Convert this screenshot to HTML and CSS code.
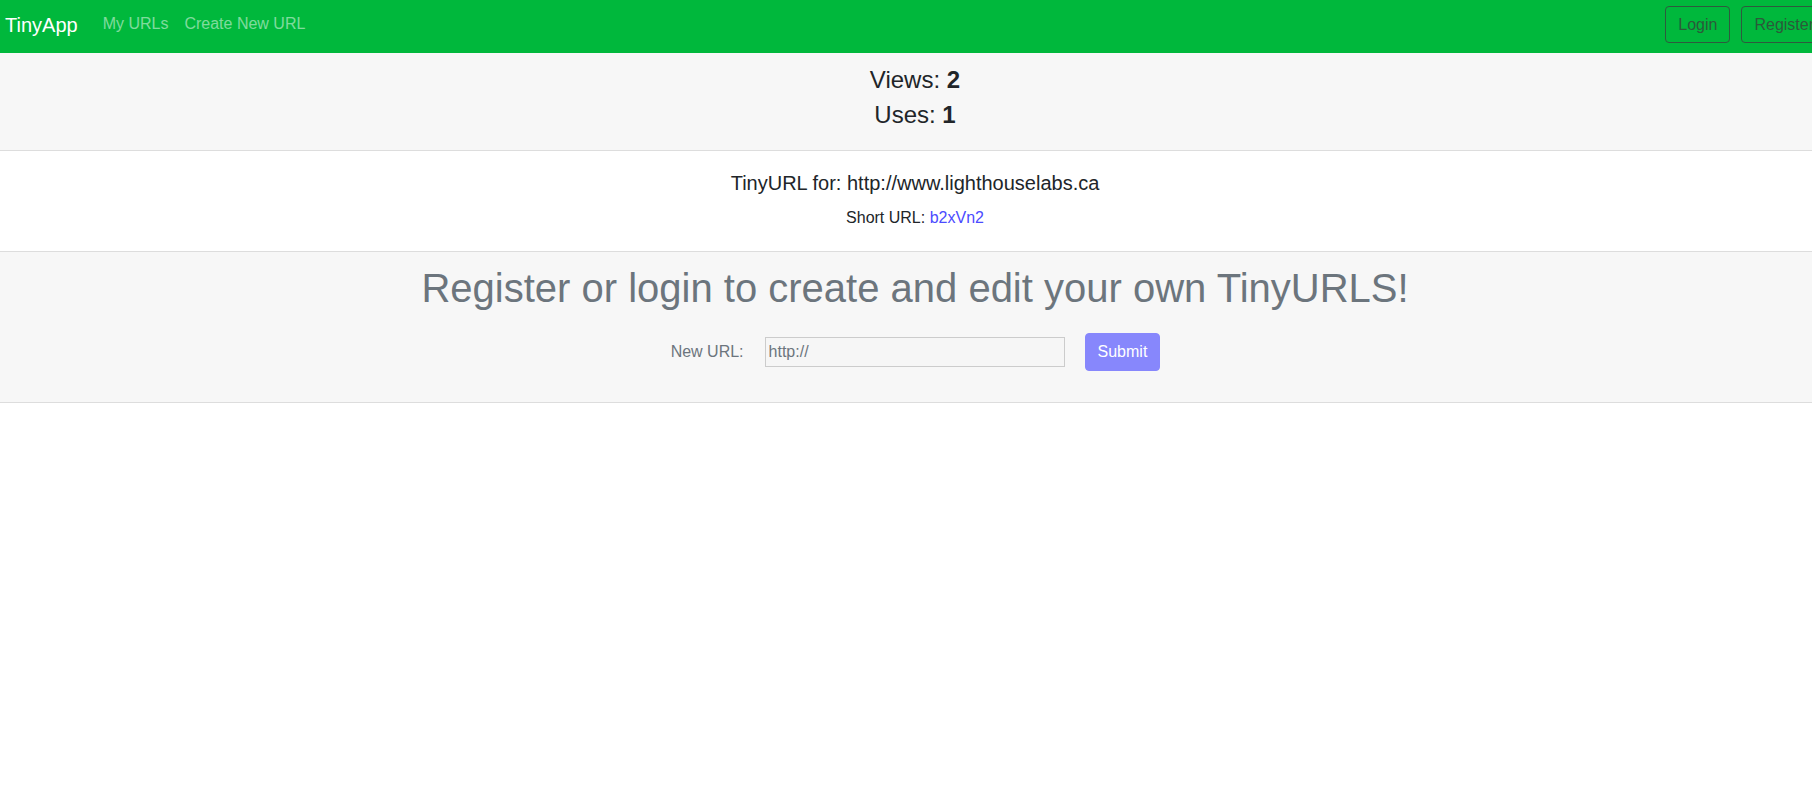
FILE: index.html
```html
<!DOCTYPE html>
<html lang="en">
<head>
<meta charset="utf-8">
<title>TinyApp</title>
<link rel="stylesheet" href="styles.css">
</head>
<body>
<div class="page">
  <nav class="navbar">
    <a class="brand" href="#">TinyApp</a>
    <a class="nav-link" href="#">My URLs</a>
    <a class="nav-link" href="#">Create New URL</a>
    <div class="nav-actions">
      <button class="btn-outline">Login</button>
      <button class="btn-outline">Register</button>
    </div>
  </nav>

  <section class="stats">
    <div class="stat">Views: <b>2</b></div>
    <div class="stat">Uses: <b>1</b></div>
  </section>

  <section class="info">
    <div class="info-title">TinyURL for: http://www.lighthouselabs.ca</div>
    <div class="info-short">Short URL: <a href="#">b2xVn2</a></div>
  </section>

  <section class="create">
    <h1 class="create-title">Register or login to create and edit your own TinyURLS!</h1>
    <form class="create-form">
      <label class="create-label">New URL:</label>
      <input class="create-input" type="text" placeholder="http://">
      <button class="btn-submit" type="button">Submit</button>
    </form>
  </section>
</div>
</body>
</html>
```

FILE: styles.css
```css
html, body {
  margin: 0;
  padding: 0;
  overflow: hidden;
  background: #ffffff;
}

.page {
  width: 1830px;
  font-family: "Liberation Sans", Arial, sans-serif;
  color: #212529;
  font-size: 16px;
}

.navbar {
  display: flex;
  align-items: flex-start;
  height: 53px;
  box-sizing: border-box;
  padding: 6px 0 0 5px;
  background: #00b83c;
}

.brand {
  font-size: 20px;
  line-height: 30px;
  margin-top: 4px;
  margin-right: 17px;
  color: #ffffff;
  text-decoration: none;
}

.nav-link {
  font-size: 16px;
  line-height: 24px;
  margin-top: 6px;
  padding: 0 8px;
  color: rgba(255, 255, 255, 0.5);
  text-decoration: none;
}

.nav-actions {
  margin-left: auto;
  margin-right: 3px;
  display: flex;
  gap: 11px;
}

.btn-outline {
  font-family: "Liberation Sans", Arial, sans-serif;
  font-size: 16px;
  line-height: 24px;
  padding: 5.5px 12px;
  background: transparent;
  color: #2b5a3a;
  border: 1px solid #2e5a3e;
  border-radius: 4px;
}

.stats {
  background: #f7f7f7;
  border-bottom: 1px solid #dddddd;
  padding: 9px 0 18px;
  text-align: center;
}

.stat {
  font-size: 24px;
  line-height: 35px;
}

.info {
  border-bottom: 1px solid #dddddd;
  padding: 18px 0 21px;
  text-align: center;
}

.info-title {
  font-size: 20px;
  line-height: 28px;
}

.info-short {
  margin-top: 9px;
  font-size: 16px;
  line-height: 24px;
}

.info-short a {
  color: #4b4bff;
  text-decoration: none;
}

.create {
  background: #f7f7f7;
  border-bottom: 1px solid #dddddd;
  padding: 12px 0 31px;
  text-align: center;
}

.create-title {
  margin: 0;
  font-size: 40px;
  line-height: 48px;
  font-weight: 400;
  color: #6c757d;
}

.create-form {
  margin-top: 21px;
  padding-left: 1px;
  display: flex;
  justify-content: center;
  align-items: center;
}

.create-label {
  font-size: 16px;
  color: #6c757d;
  margin-right: 21px;
}

.create-input {
  width: 300px;
  height: 30px;
  box-sizing: border-box;
  border: 1px solid #cccccc;
  background: #f6f6f6;
  font-family: "Liberation Sans", Arial, sans-serif;
  font-size: 16px;
  padding: 0 3px;
  color: #495057;
  margin-right: 20px;
}

.create-input::placeholder {
  color: #6c757d;
}

.btn-submit {
  font-family: "Liberation Sans", Arial, sans-serif;
  font-size: 16px;
  line-height: 24px;
  padding: 6px 12px;
  background: #8787fc;
  color: #ffffff;
  border: 1px solid #8787fc;
  border-radius: 4px;
}
```
